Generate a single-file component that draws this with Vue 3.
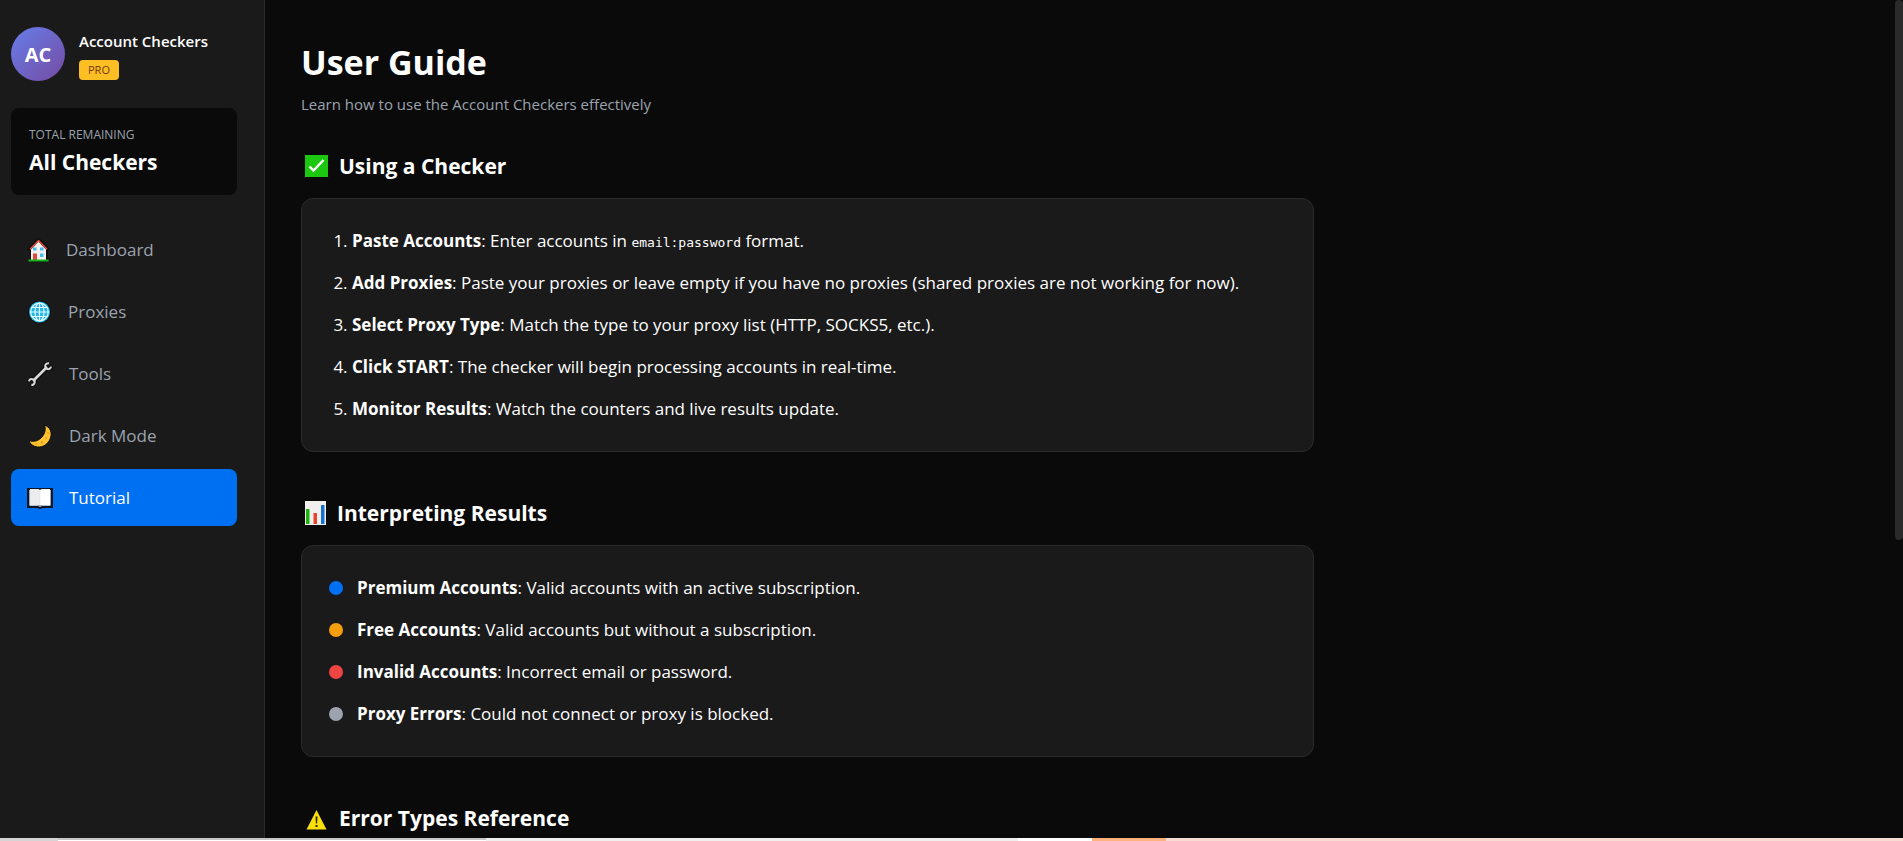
<script setup>
import { ref } from 'vue'

const active = ref('tutorial')

const navItems = [
  { id: 'dashboard', label: 'Dashboard' },
  { id: 'proxies', label: 'Proxies' },
  { id: 'tools', label: 'Tools' },
  { id: 'dark', label: 'Dark Mode' },
  { id: 'tutorial', label: 'Tutorial' }
]

const results = [
  { type: 'premium', name: 'Premium Accounts', text: 'Valid accounts with an active subscription.' },
  { type: 'free', name: 'Free Accounts', text: 'Valid accounts but without a subscription.' },
  { type: 'invalid', name: 'Invalid Accounts', text: 'Incorrect email or password.' },
  { type: 'error', name: 'Proxy Errors', text: 'Could not connect or proxy is blocked.' }
]
</script>

<template>
  <div class="page">
    <div class="app">
      <aside class="sidebar">
        <div class="profile">
          <div class="avatar">AC</div>
          <div class="profile-info">
            <span class="profile-name">Account Checkers</span>
            <span class="badge">PRO</span>
          </div>
        </div>

        <div class="remaining">
          <span class="remaining-label">TOTAL REMAINING</span>
          <span class="remaining-value">All Checkers</span>
        </div>

        <nav class="nav">
          <button
            v-for="item in navItems"
            :key="item.id"
            class="nav-item"
            :class="{ active: active === item.id }"
            @click="active = item.id"
          >
            <svg v-if="item.id === 'dashboard'" width="23" height="24" viewBox="0 0 23 24">
              <path d="M4 11v12h16V11l-8-8z" fill="#f3f1f0" stroke="#0b0b0b" stroke-width="2" />
              <path d="M4 11v11h15V11l-7.500-8z" fill="#f3f1f0" />
              <path d="M1.500 12 11.500 1.500 21.500 12" fill="none" stroke="#0b0b0b" stroke-width="3" />
              <path d="M3 11.200 11.500 2.500 20 11.200" fill="none" stroke="#e8553f" stroke-width="1.500" />
              <path d="M6 9.500h3.500v3H6zM13 9.500h3.500v3H13zM13 15.500h3.500v3.500H13z" fill="#46bdea" />
              <path d="M6 15.500h4V22H6z" fill="#dc4b3b" />
              <path d="M1.500 21.500h20v2h-20z" fill="#16b51c" />
            </svg>
            <svg v-else-if="item.id === 'proxies'" width="25" height="24" viewBox="0 0 25 24">
              <circle cx="12.500" cy="12" r="11.500" fill="#0d1113" />
              <circle cx="12.500" cy="12" r="10.500" fill="#1fb6e8" />
              <g fill="none" stroke="#e4fbff" stroke-width="1.200">
                <ellipse cx="12.500" cy="12" rx="4.500" ry="9" />
                <circle cx="12.500" cy="12" r="8.800" />
                <path d="M12.500 2.500v19M3 12h19M4.500 7.500h16M4.500 16.500h16" />
              </g>
            </svg>
            <svg v-else-if="item.id === 'tools'" width="26" height="24" viewBox="0 0 26 24">
              <g fill="none">
                <path d="M6 19 20 5" stroke="#0b0b0b" stroke-width="5" />
                <path d="M22.500 1.500a3 3 0 1 0 2 3M3 22.500a3 3 0 1 0-1-3.500" stroke="#0b0b0b" stroke-width="4" />
                <path d="M6 19 20 5" stroke="#d9d9d9" stroke-width="2.600" />
                <path d="M22 1.500a2.900 2.900 0 1 0 2 3.200M4.300 22.800a2.900 2.900 0 1 0-2.300-3.600" stroke="#d9d9d9" stroke-width="2" />
              </g>
            </svg>
            <svg v-else-if="item.id === 'dark'" width="26" height="24" viewBox="0 0 26 24">
              <path
                d="M17.500 1C23 3 25.500 8.500 23.500 14 21.500 20 16 23.500 10.500 23 6 22.500 3 20 2 16.500 7 18.500 12 16.500 15 13c3-3.500 4-8 2.500-12z"
                fill="#fcc22f"
                stroke="#0d0d0d"
                stroke-width="1"
              />
              <g fill="#e89a17">
                <circle cx="21" cy="9" r="1" />
                <circle cx="15" cy="18.500" r="1.200" />
                <circle cx="9" cy="20" r=".8" />
                <circle cx="19" cy="14" r=".9" />
              </g>
            </svg>
            <svg v-else width="26" height="24" viewBox="0 0 26 24">
              <path d="M0 2h26v20H16l-3 1-3-1H0z" fill="#0c1622" />
              <path d="M2 4h1v15H2zM23 4h1v15h-1z" fill="#9aa7b5" />
              <path d="M3 3h8.500l1.500 1v16l-1.500-1H3z" fill="#ececef" />
              <path d="M23 3h-8.500L13 4v16l1.500-1H23z" fill="#fff" />
              <path d="M2.500 19.500H11l2 1 2-1h8.500" fill="none" stroke="#b8c2cd" stroke-width="1" />
              <path d="M13 4v15" stroke="#dcdce0" stroke-width=".4" />
            </svg>
            <span>{{ item.label }}</span>
          </button>
        </nav>
      </aside>

      <main class="content">
        <div class="guide">
          <h1>User Guide</h1>
          <p class="subtitle">Learn how to use the Account Checkers effectively</p>

          <section>
            <h2>
              <svg width="30" height="24" viewBox="0 0 30 24">
                <path d="M4 1h23v22H4z" fill="#1bc70f" />
                <path d="M8.500 12.500l4 4L22.500 6" fill="none" stroke="#fff" stroke-width="2.400" />
              </svg>
              Using a Checker
            </h2>
            <div class="card">
              <ol class="steps">
                <li><strong>Paste Accounts</strong>: Enter accounts in <code>email:password</code> format.</li>
                <li><strong>Add Proxies</strong>: Paste your proxies or leave empty if you have no proxies (shared proxies are not working for now).</li>
                <li><strong>Select Proxy Type</strong>: Match the type to your proxy list (HTTP, SOCKS5, etc.).</li>
                <li><strong>Click START</strong>: The checker will begin processing accounts in real-time.</li>
                <li><strong>Monitor Results</strong>: Watch the counters and live results update.</li>
              </ol>
            </div>
          </section>

          <section>
            <h2>
              <svg width="28" height="24" viewBox="0 0 28 24">
                <path d="M4 0h21v24H4z" fill="#f1f0ef" />
                <path d="M5 8h3.500v15H5z" fill="#1fb312" />
                <path d="M12.500 12H16v11h-3.500z" fill="#e8432e" />
                <path d="M20 4h3.500v19H20z" fill="#1372d3" />
              </svg>
              Interpreting Results
            </h2>
            <div class="card">
              <ul class="results">
                <li v-for="row in results" :key="row.type">
                  <span class="dot" :class="row.type"></span>
                  <span><strong>{{ row.name }}</strong>: {{ row.text }}</span>
                </li>
              </ul>
            </div>
          </section>

          <section>
            <h2>
              <svg width="30" height="24" viewBox="0 0 30 24">
                <path d="M15.500 4 25.500 23.500h-20z" fill="#f9e00c" />
                <path d="M14.500 10.500h2l-.4 7h-1.200zM14.500 19h2v2h-2z" fill="#2b2706" />
              </svg>
              Error Types Reference
            </h2>
          </section>
        </div>
      </main>

      <div class="scroll-track">
        <div class="scroll-thumb"></div>
      </div>
    </div>

    <div class="taskbar">
      <span class="task edge"></span>
      <span class="task search"></span>
      <span class="task tray"></span>
      <span class="task window"></span>
      <span class="task alert"></span>
      <span class="task rest"></span>
    </div>
  </div>
</template>

<style>
body {
  background-color: #0a0a0a;
}
</style>

<style scoped>
* {
  box-sizing: border-box;
}

.page {
  display: flex;
  flex-direction: column;
  height: 100vh;
  overflow: hidden;
  background-color: #0a0a0a;
  color: #fff;
  font-family: 'Open Sans', 'Noto Sans', sans-serif;
}

.app {
  display: flex;
  flex: 1;
  min-height: 0;
}

.sidebar {
  flex: none;
  width: 265px;
  padding: 27px 27px 0 11px;
  background-color: #1a1a1a;
  border-right: 1px solid #2a2a2a;
}

.profile {
  display: flex;
  align-items: center;
  gap: 14px;
}

.avatar {
  display: flex;
  align-items: center;
  justify-content: center;
  width: 54px;
  height: 54px;
  border-radius: 50%;
  background: linear-gradient(135deg, #667eea, #764ba2);
  font-size: 20px;
  font-weight: 700;
}

.profile-info {
  display: flex;
  flex-direction: column;
  align-items: flex-start;
  gap: 7px;
}

.profile-name {
  font-size: 15px;
  font-weight: 600;
  line-height: 24px;
}

.badge {
  padding: 0 9px;
  border-radius: 4px;
  background-color: #fbbf24;
  color: #78350f;
  font-size: 11px;
  line-height: 20px;
}

.remaining {
  display: flex;
  flex-direction: column;
  margin-top: 27px;
  padding: 16px 18px;
  border-radius: 8px;
  background-color: #0a0a0a;
}

.remaining-label {
  color: #9ca3af;
  font-size: 12px;
  line-height: 22px;
}

.remaining-value {
  font-size: 21px;
  font-weight: 700;
  line-height: 33px;
}

.nav {
  display: flex;
  flex-direction: column;
  gap: 5px;
  margin-top: 26px;
}

.nav-item {
  display: flex;
  align-items: center;
  gap: 16px;
  height: 57px;
  padding: 0 16px;
  border: none;
  border-radius: 8px;
  background: none;
  color: #9ca3af;
  font-family: inherit;
  font-size: 17px;
  cursor: pointer;
}

.nav-item.active {
  background-color: #0070f3;
  color: #fff;
}

.content {
  flex: 1;
  min-width: 0;
  padding: 36px;
  overflow: hidden;
}

.guide {
  max-width: 1013px;
}

h1 {
  margin: 0 0 4px;
  font-size: 34px;
  font-weight: 700;
  line-height: 52px;
}

.subtitle {
  margin: 0 0 34px;
  color: #9ca3af;
  font-size: 15px;
  line-height: 24px;
}

section {
  margin-bottom: 45px;
}

h2 {
  display: flex;
  align-items: center;
  gap: 8px;
  margin: 0 0 16px;
  font-size: 21px;
  font-weight: 700;
  line-height: 32px;
}

.card {
  padding: 28px 27px;
  border: 1px solid #2a2a2a;
  border-radius: 12px;
  background-color: #1a1a1a;
  font-size: 17px;
  line-height: 28px;
}

.steps,
.results {
  display: flex;
  flex-direction: column;
  gap: 14px;
  margin: 0;
  padding: 0;
}

.steps {
  padding-left: 23px;
}

.results li {
  display: flex;
  align-items: center;
  gap: 14px;
}

code {
  font-family: 'DejaVu Sans Mono', monospace;
  font-size: 13px;
  line-height: 1;
}

.dot {
  width: 14px;
  height: 14px;
  border-radius: 50%;
}

.dot.premium {
  background-color: #0070f3;
}

.dot.free {
  background-color: #f59e0b;
}

.dot.invalid {
  background-color: #ef4444;
}

.dot.error {
  background-color: #9ca3af;
}

.scroll-track {
  flex: none;
  width: 8px;
}

.scroll-thumb {
  height: 540px;
  border-radius: 4px;
  background-color: #2a2a2a;
}

.taskbar {
  display: flex;
  flex: none;
  height: 3px;
}

.task.edge {
  width: 58px;
  background-color: #d6d4d4;
}

.task.search {
  width: 428px;
  background-color: #fff;
  border-top: 2px solid #c9c7c7;
}

.task.tray {
  width: 532px;
  background-color: #f1eeee;
}

.task.window {
  width: 74px;
  background-color: #fff;
}

.task.alert {
  width: 74px;
  background-color: #ffb27c;
}

.task.rest {
  flex: 1;
  background-color: #f7dcd3;
}
</style>
